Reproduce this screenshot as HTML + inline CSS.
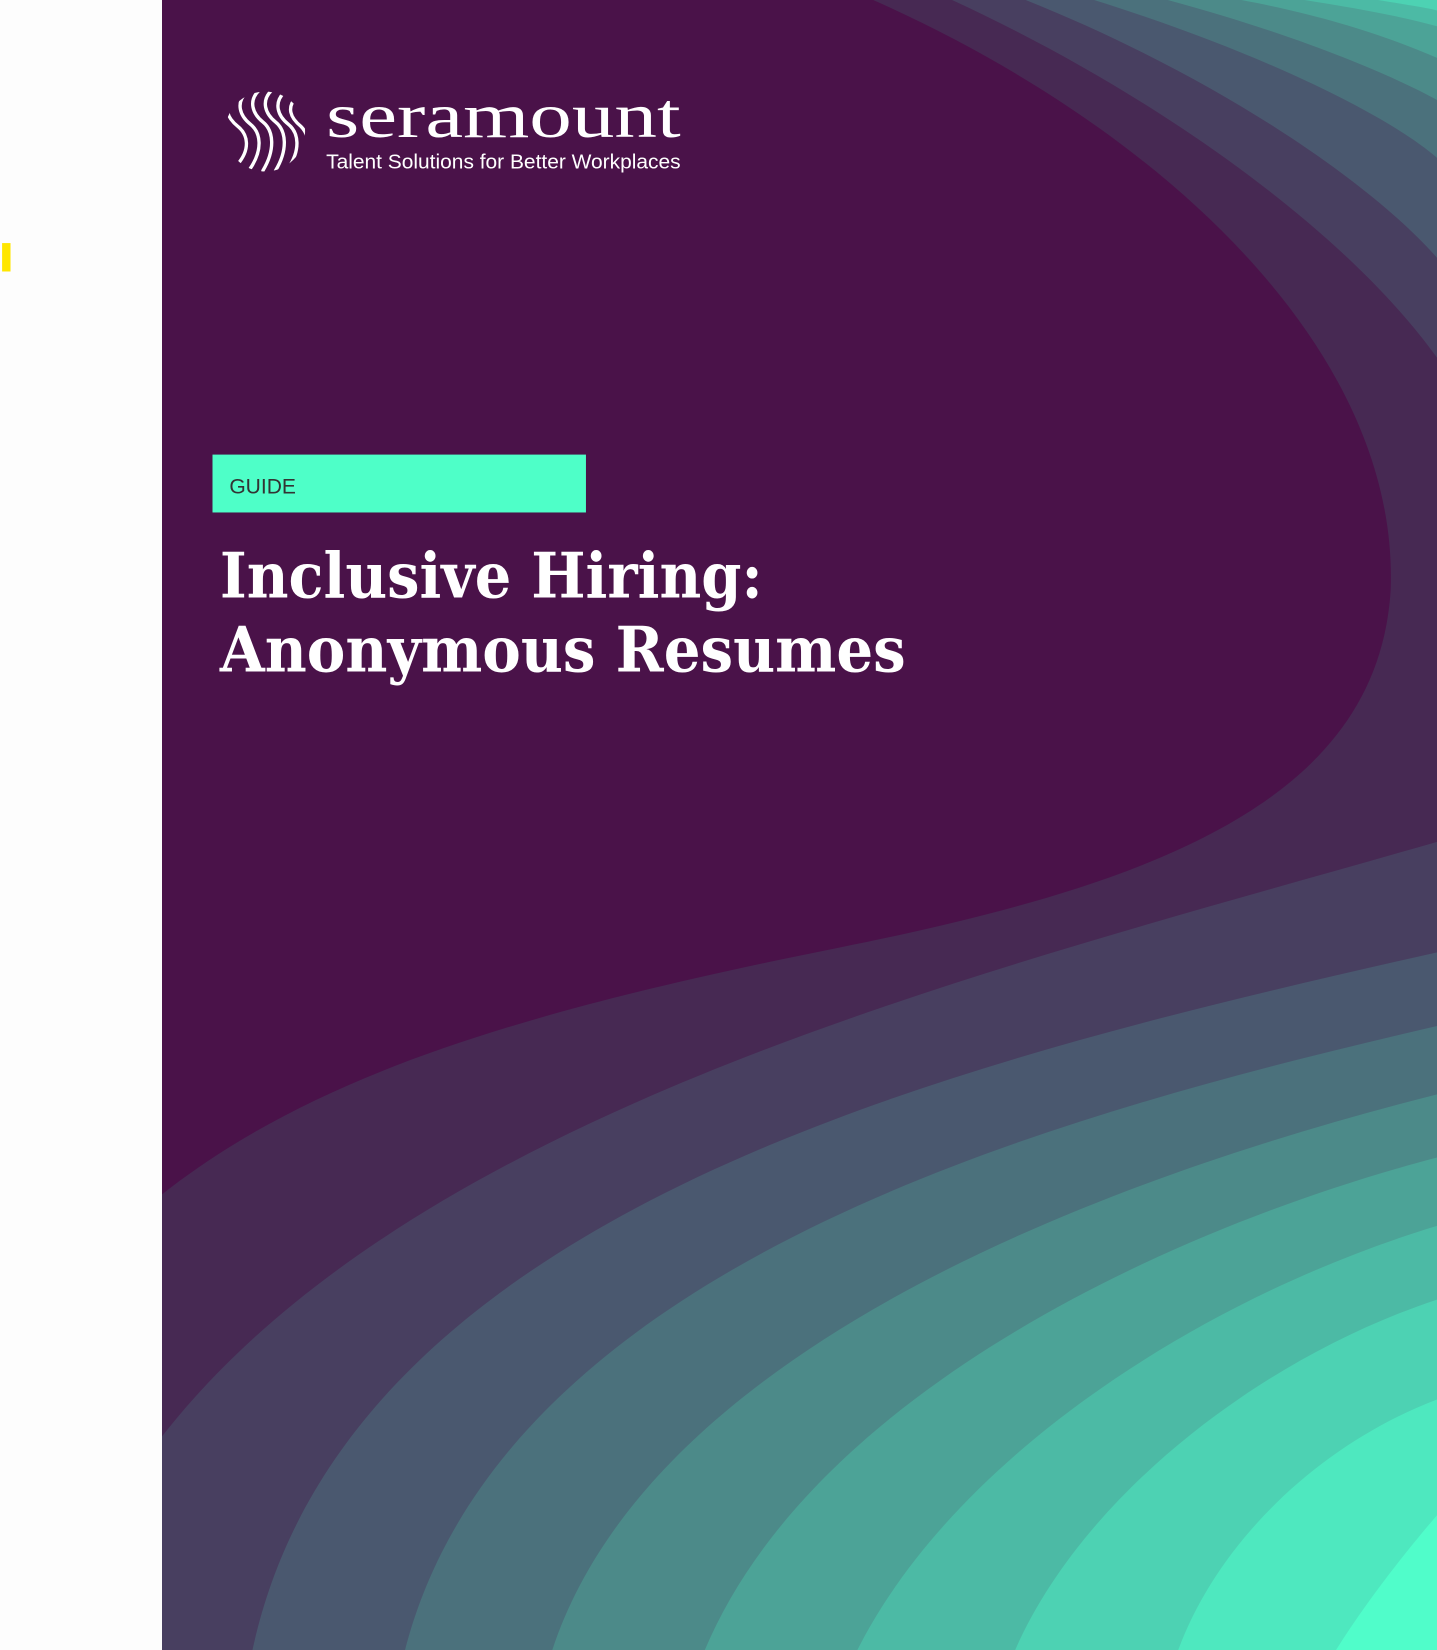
<!DOCTYPE html>
<html><head><meta charset="utf-8"><style>
html,body{margin:0;padding:0;background:#fdfdfd;}
svg{display:block;}
</style></head><body>
<svg width="1437" height="1650" viewBox="0 0 1366 1568" preserveAspectRatio="none" xmlns="http://www.w3.org/2000/svg">
<rect x="0" y="0" width="1366" height="1568" fill="#fdfdfd"/>
<rect x="2" y="231" width="8" height="27" fill="#ffe600"/>
<rect x="154" y="0" width="1212" height="1568" fill="#50fdca"/>
<path d="M154,0H1366V1440C1340,1470 1300,1520 1270,1568H154Z" fill="#4ee8bf"/>
<path d="M154,0H1366V1330C1260,1370 1160,1460 1120,1568H154Z" fill="#4dd2b3"/>
<path d="M154,0H1310C1340,5 1360,8 1366,10V1235C1200,1290 1030,1420 965,1568H154Z" fill="#4cbaa5"/>
<path d="M154,0H1240C1290,8 1330,15 1366,25V1165C1150,1230 910,1380 815,1568H154Z" fill="#4ca397"/>
<path d="M154,0H1180C1260,15 1320,35 1366,55V1100C1100,1170 770,1330 670,1568H154Z" fill="#4c8a89"/>
<path d="M154,0H1110C1240,35 1330,75 1366,95V1040C1050,1120 620,1280 525,1568H154Z" fill="#4b717c"/>
<path d="M154,0H1040C1200,50 1320,110 1366,150V975C1000,1060 480,1200 385,1568H154Z" fill="#4a586f"/>
<path d="M154,0H975C1150,70 1300,170 1366,245V905C900,1010 330,1150 240,1568H154Z" fill="#483f60"/>
<path d="M154,0H905C1100,90 1280,220 1366,340V800C950,920 400,1050 154,1365Z" fill="#472953"/>
<path d="M154,0H830C1100,120 1330,330 1322,560C1310,760 1100,840 800,900C500,960 300,1020 154,1135Z" fill="#4a1249"/>
<defs><clipPath id="c"><circle cx="252" cy="125" r="38"/></clipPath></defs>
<g clip-path="url(#c)" fill="none" stroke="#fff" stroke-width="3.2" stroke-linecap="round">
<path d="M222,92C212,102 216,112 226,120C236,128 238,142 226,156"/>
<path d="M234,88C224,98 228,110 238,118C248,126 250,142 238,160"/>
<path d="M246,86C236,96 240,108 250,116C260,124 262,142 250,162"/>
<path d="M258,86C248,96 252,108 262,116C272,124 274,142 262,162"/>
<path d="M270,88C260,98 264,110 274,118C284,126 286,142 274,160"/>
<path d="M282,92C272,102 276,112 286,120C294,128 296,142 286,156"/>
</g>
<text x="310" y="130" font-family="Liberation Serif, serif" font-size="60" fill="#fff" textLength="337" lengthAdjust="spacingAndGlyphs">seramount</text>
<text x="310" y="160" font-family="Liberation Sans, sans-serif" font-size="19.5" fill="#fff" textLength="337" lengthAdjust="spacingAndGlyphs">Talent Solutions for Better Workplaces</text>
<rect x="202" y="432" width="355" height="55" fill="#4effc8"/>
<text x="218" y="469" font-family="Liberation Sans, sans-serif" font-size="20" fill="#333">GUIDE</text>
<text x="209" y="568" font-family="DejaVu Serif, serif" font-weight="bold" font-size="60" fill="#fff" textLength="516" lengthAdjust="spacingAndGlyphs">Inclusive Hiring:</text>
<text x="209" y="638" font-family="DejaVu Serif, serif" font-weight="bold" font-size="60" fill="#fff" textLength="652" lengthAdjust="spacingAndGlyphs">Anonymous Resumes</text>
</svg>
</body></html>
